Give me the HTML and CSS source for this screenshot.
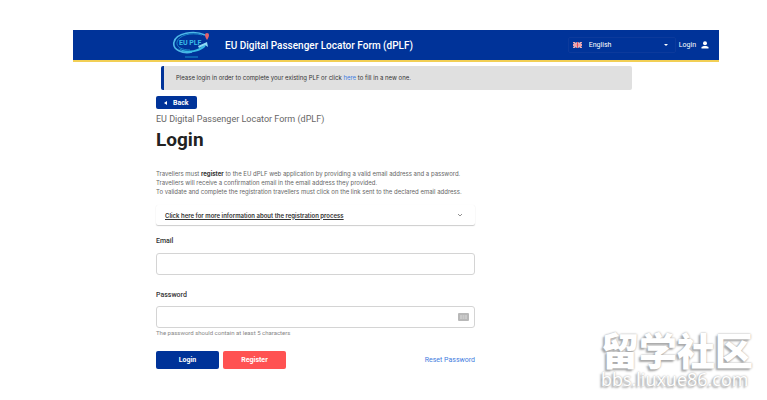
FILE: index.html
```html
<!DOCTYPE html>
<html lang="en">
  <head>
    <meta charset="UTF-8" />
    <meta name="viewport" content="width=device-width, initial-scale=1.0" />
    <title>EU Digital Passenger Locator Form (dPLF)</title>
    <link rel="stylesheet" href="styles.css">
  </head>
  <body>
    <div class="page">
      <header class="header">
        <svg class="logo" viewBox="0 0 40 28" aria-hidden="true">
          <path d="M34 4C23-1 5 2 3 11c-2 8 9 12 18 10" fill="none" stroke="#4db8e8" stroke-width="1.6" />
          <path d="M31 4C20 1 8 4 6 11c-1 5 5 8 13 8" fill="none" stroke="#1787c9" stroke-width="1" />
          <path d="M7 17c8 5 22 3 29-6l-2 5c-7 6-20 8-27 1z" fill="#39bce6" />
          <path d="M27 15l9-4 1 5-3-2-6 3z" fill="#8fdcf5" />
          <path d="M36 2a2 2 0 0 1 2 2c0 2-2 5-2 5s-2-3-2-5a2 2 0 0 1 2-2z" fill="#e2626b" />
          <text class="logo-text" x="8" y="14">EU PLF</text>
          <path d="M14 26h13" stroke="#168ecb" stroke-width="1" />
        </svg>
        <p class="app-name">EU Digital Passenger Locator Form (dPLF)</p>
        <div class="language">
          <svg class="flag" viewBox="0 0 9 6" aria-hidden="true">
            <path d="M0 0h9v6H0z" fill="#33478f" />
            <path d="M0 0l9 6M9 0L0 6" stroke="#fff" stroke-width="1.4" />
            <path d="M0 0l9 6M9 0L0 6" stroke="#e34b5b" stroke-width=".6" />
            <path d="M4.500 0v6M0 3h9" stroke="#fff" stroke-width="2" />
            <path d="M4.500 0v6M0 3h9" stroke="#e34b5b" stroke-width="1.200" />
          </svg>
          <select class="language-select" aria-label="Language">
            <option>English</option>
          </select>
          <svg class="caret" viewBox="0 0 6 3" aria-hidden="true"><path d="M0 0h6L3 3z" fill="#fff" /></svg>
        </div>
        <a class="account" href="#">
          Login
          <svg class="person" viewBox="0 0 8 8" aria-hidden="true">
            <circle cx="4" cy="2.300" r="2" fill="#fff" />
            <path d="M.5 7.500V6.500C.5 4.500 7.500 4.500 7.500 6.500v1z" fill="#fff" />
          </svg>
        </a>
      </header>

      <main class="main">
        <p class="notice">Please login in order to complete your existing PLF or click <a href="#">here</a> to fill in a new one.</p>

        <div class="content">
          <button class="btn btn-back" type="button">
            <svg class="back-icon" viewBox="0 0 3 4" aria-hidden="true"><path d="M3 0v4L0 2z" fill="#fff" /></svg>
            Back
          </button>
          <p class="subtitle">EU Digital Passenger Locator Form (dPLF)</p>
          <h1 class="title">Login</h1>

          <p class="intro">
            Travellers must <strong>register</strong> to the EU dPLF web application by providing a valid email address and a password.<br />
            Travellers will receive a confirmation email in the email address they provided.<br />
            To validate and complete the registration travellers must click on the link sent to the declared email address.
          </p>

          <button class="panel" type="button">
            <span class="panel-text">Click here for more information about the registration process</span>
            <svg class="chevron" viewBox="0 0 6 4" aria-hidden="true"><path d="M1 1l2 2 2-2" fill="none" stroke="#777" stroke-width=".8" /></svg>
          </button>

          <form class="form">
            <label class="label" for="email">Email</label>
            <input class="input" id="email" type="email" />

            <label class="label label-password" for="password">Password</label>
            <div class="password-box">
              <input class="input" id="password" type="password" />
              <svg class="key-icon" viewBox="0 0 11 8" aria-hidden="true">
                <rect width="11" height="8" rx="1" fill="#b8b8b8" />
                <path d="M2 3h7M2 5h7" stroke="#ddd" stroke-width="1" stroke-dasharray="2 .5" />
              </svg>
            </div>
            <p class="hint">The password should contain at least 5 characters</p>

            <div class="actions">
              <button class="btn btn-login" type="button">Login</button>
              <button class="btn btn-register" type="button">Register</button>
              <a class="reset" href="#">Reset Password</a>
            </div>
          </form>
        </div>
      </main>
    </div>

    <div class="watermark">
      <p class="watermark-name" lang="zh">留学社区</p>
      <p class="watermark-url">bbs.liuxue86.com</p>
    </div>
  </body>
</html>
```

FILE: styles.css
```css
* {
  box-sizing: border-box;
  margin: 0;
  padding: 0;
}

body {
  background-color: white;
  color: #444;
  font-family: Roboto, "Liberation Sans", sans-serif;
  font-size: 6px;
}

button,
input,
select {
  font-family: inherit;
}

a {
  color: #3f7de0;
  text-decoration: none;
}

.page {
  margin: 30px 48px 0 73px;
}

/* header */
.header {
  display: flex;
  align-items: center;
  height: 32px;
  padding: 0 10px 0 98px;
  background-color: #003399;
  border-bottom: 2px solid #f2cf55;
}

.logo {
  width: 40px;
  height: 28px;
}

.logo-text {
  fill: #39bce6;
  font-size: 7px;
  font-weight: bold;
}

.app-name {
  margin-left: 14px;
  color: white;
  font-size: 10px;
  font-weight: 500;
}

.language {
  position: relative;
  width: 108px;
  margin-left: auto;
}

.language-select {
  display: block;
  width: 100%;
  height: 16px;
  padding-left: 20px;
  appearance: none;
  background: none;
  border: 1px solid #0c3a9c;
  border-radius: 2px;
  color: white;
  font-size: 7px;
}

.flag {
  position: absolute;
  top: 5px;
  left: 5px;
  width: 9px;
  height: 6px;
}

.caret {
  position: absolute;
  top: 7px;
  right: 8px;
  width: 4px;
  height: 2px;
}

.account {
  display: flex;
  align-items: center;
  gap: 5px;
  margin-left: 3px;
  color: white;
  font-size: 7px;
}

.person {
  width: 8px;
  height: 8px;
}

/* page content */
.main {
  padding: 4px 87px 0 83px;
}

.notice,
.intro,
.panel {
  font-family: Inter, sans-serif;
}

.notice {
  margin-left: 5px;
  padding-left: 12px;
  background-color: #e0e0e0;
  border-left: 3px solid #003399;
  border-radius: 2px;
  color: #333;
  line-height: 24px;
}

.content {
  max-width: 319px;
  padding-top: 6px;
}

.btn {
  border: none;
  border-radius: 2px;
  background-color: #003399;
  color: white;
  font-size: 7px;
  font-weight: bold;
}

.btn-back {
  display: flex;
  align-items: center;
  gap: 6px;
  height: 13px;
  padding: 0 8px;
}

.back-icon {
  width: 3px;
  height: 4px;
}

.subtitle {
  margin-top: 4px;
  color: #666;
  font-size: 9px;
  line-height: 12px;
}

.title {
  margin-top: 4px;
  color: #222;
  font-size: 19px;
  line-height: 22px;
}

.intro {
  margin-top: 18px;
  color: #666;
  line-height: 9px;
  white-space: nowrap;
}

.intro strong {
  color: #333;
}

.panel {
  display: flex;
  align-items: center;
  justify-content: space-between;
  width: 100%;
  height: 20px;
  margin-top: 9px;
  padding: 0 12px 0 9px;
  background-color: white;
  border: none;
  border-radius: 2px;
  box-shadow: 0 1px 1px #ccc, 0 0 1px #eee;
  color: #333;
  font-size: 6px;
  font-weight: 600;
}

.panel-text {
  text-decoration: underline;
}

.chevron {
  width: 6px;
  height: 4px;
}

.label {
  display: block;
  margin: 12px 0 7px;
  color: #333;
  font-size: 7px;
  font-weight: 500;
  line-height: 9px;
}

.label-password {
  margin-top: 16px;
  margin-bottom: 6px;
}

.input {
  display: block;
  width: 100%;
  height: 22px;
  padding: 0 8px;
  background-color: white;
  border: 1px solid #d4d4d4;
  border-radius: 3px;
  font-size: 7px;
}

.password-box {
  position: relative;
}

.key-icon {
  position: absolute;
  top: 7px;
  right: 6px;
  width: 11px;
  height: 8px;
}

.hint {
  margin-top: 1px;
  color: #888;
  line-height: 8px;
}

.actions {
  display: flex;
  align-items: center;
  gap: 4px;
  margin-top: 14px;
}

.btn-login,
.btn-register {
  width: 63px;
  height: 18px;
}

.btn-register {
  background-color: #ff5252;
}

.reset {
  margin-left: auto;
  font-size: 7px;
}

/* watermark */
.watermark {
  position: absolute;
  right: 14px;
  bottom: 11px;
  color: white;
  text-shadow: -2px 2px 2px #aaa, 0 0 2px #999;
}

.watermark-name {
  font-family: "Noto Sans CJK SC", sans-serif;
  font-size: 38px;
  font-weight: 900;
  line-height: 40px;
}

.watermark-url {
  font-family: "Open Sans", sans-serif;
  font-size: 18px;
  line-height: 20px;
}
```
